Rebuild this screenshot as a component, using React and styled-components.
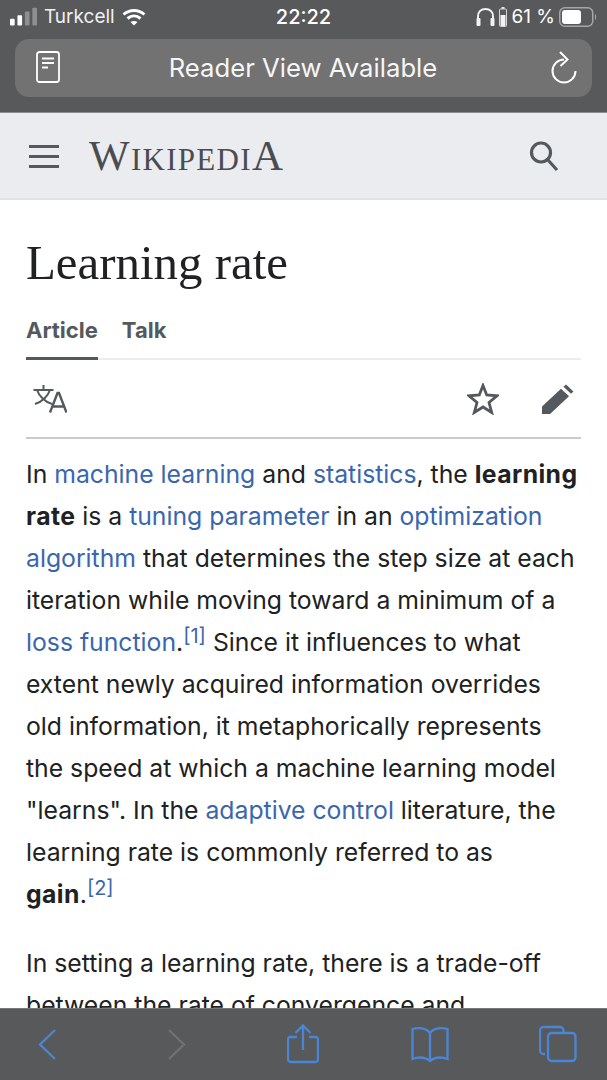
import React from "react";
import styled, { createGlobalStyle } from "styled-components";

const Global = createGlobalStyle`
  html, body { margin: 0; padding: 0; background: #fff; }
  body { font-family: Inter, "Liberation Sans", sans-serif; }
`;

const Page = styled.div`
  width: 607px;
  height: 1080px;
  display: flex;
  flex-direction: column;
  overflow: hidden;
  background: #fff;
`;

const TopChrome = styled.div`
  flex: none;
  height: 113px;
  box-sizing: border-box;
  background: #58595b;
  border-bottom: 1px solid #8b8c8e;
  color: #fff;
`;

const StatusBar = styled.div`
  height: 39px;
  box-sizing: border-box;
  padding: 0 10px 6px 10px;
  display: grid;
  grid-template-columns: 1fr auto 1fr;
  align-items: center;
  font-size: 19px;
`;

const StatusSide = styled.div`
  display: flex;
  align-items: center;
  gap: ${(p) => p.$gap || 7}px;
  justify-content: ${(p) => (p.$end ? "flex-end" : "flex-start")};
`;

const Carrier = styled.span`
  color: #f0f0f0;
  font-weight: 400;
`;

const Clock = styled.span`
  font-weight: 500;
  font-size: 20px;
`;

const AddressPill = styled.div`
  margin: 0 15px;
  height: 58px;
  box-sizing: border-box;
  border-radius: 14px;
  background: #727272;
  display: flex;
  align-items: center;
  justify-content: space-between;
  padding: 0 14px 2px 21px;
  font-size: 25.7px;
  color: #f6f6f6;
`;

const WikiHeader = styled.div`
  flex: none;
  height: 87px;
  box-sizing: border-box;
  background: #eaecf0;
  border-bottom: 2px solid #e2e3e6;
  display: flex;
  align-items: center;
  padding: 0 48px 0 29px;
  color: #54595d;
`;

const Logo = styled.div`
  margin-left: 30px;
  flex: 1;
  font-family: "Liberation Serif", serif;
  font-size: 31px;
  letter-spacing: 1.3px;
  color: #4a4d50;
  line-height: 1;
`;

const LogoCap = styled.span`
  font-size: 43px;
`;

const Content = styled.main`
  flex: 1;
  min-height: 0;
  overflow: hidden;
  padding: 0 26px;
`;

const Title = styled.h1`
  margin: 35px 0 0;
  font-family: "Liberation Serif", serif;
  font-weight: 400;
  font-size: 48.9px;
  line-height: 56px;
  color: #202122;
`;

const Tabs = styled.div`
  margin-top: 24px;
  display: flex;
  gap: 24px;
  border-bottom: 2px solid #eaecf0;
`;

const Tab = styled.div`
  font-size: 22px;
  font-weight: 700;
  line-height: 30px;
  padding-bottom: 12px;
  margin-bottom: -2px;
  color: #54595d;
  border-bottom: 3px solid ${(p) => (p.$active ? "#54595d" : "transparent")};
`;

const Actions = styled.div`
  height: 79px;
  box-sizing: border-box;
  display: flex;
  align-items: center;
  justify-content: space-between;
  padding: 0 7px 0 7px;
  border-bottom: 2px solid #c8ccd1;
`;

const ActionGroup = styled.div`
  display: flex;
  align-items: center;
  gap: 43px;
`;

const Para = styled.p`
  margin: 0 0 27px 0;
  font-size: 24.75px;
  line-height: 42px;
  color: #202122;
  &:first-of-type { margin-top: 14px; }
`;

const Strong = styled.b`
  letter-spacing: 0.4px;
`;

const NoWrap = styled.span`
  white-space: nowrap;
`;

const A = styled.a`
  color: #3a66ad;
`;

const Sup = styled.sup`
  font-size: 20px;
  line-height: 0;
  color: #3a66ad;
  vertical-align: 8px;
`;

const BottomBar = styled.nav`
  flex: none;
  height: 72px;
  box-sizing: border-box;
  background: #58595b;
  border-top: 1px solid #77787a;
  display: grid;
  grid-template-columns: 130px 120px 123px 129px auto;
  align-items: start;
  padding: 15px 0 0 37px;
`;

const BarItem = styled.div`
  color: ${(p) => (p.$dim ? "#707173" : "#4a86d8")};
  line-height: 0;
`;

const Signal = () => (
  <svg width="27" height="20" viewBox="0 0 29 20">
    <rect x="0" y="12" width="5" height="7" rx="1" fill="#fff" />
    <rect x="8" y="8" width="5" height="11" rx="1" fill="#fff" />
    <rect x="16" y="4" width="5" height="15" rx="1" fill="#8e8f91" />
    <rect x="24" y="0" width="5" height="19" rx="1" fill="#8e8f91" />
  </svg>
);

const Wifi = () => (
  <svg width="24" height="18" viewBox="0 0 24 18" fill="none" stroke="#fff" strokeWidth="3">
    <path d="M1.500 6.500C7.500 1 16.500 1 22.500 6.500" />
    <path d="M5.500 10.500C9.500 7 14.500 7 18.500 10.500" />
    <path d="M12 17.500 8.500 14C10.500 12.500 13.500 12.500 15.500 14Z" fill="#fff" stroke="none" />
  </svg>
);

const Headphones = () => (
  <svg width="19" height="20" viewBox="0 0 19 20" fill="none">
    <path d="M2 14V9.500C2 5 5 2 9.500 2S17 5 17 9.500V14" stroke="#f2f2f2" strokeWidth="2" />
    <rect x="0.500" y="11" width="4" height="8" rx="1" fill="#f2f2f2" />
    <rect x="14.500" y="11" width="4" height="8" rx="1" fill="#f2f2f2" />
  </svg>
);

const SmallCell = () => (
  <svg width="8" height="20" viewBox="0 0 8 20">
    <rect x="2.500" y="0" width="3" height="2" fill="#e5e5e5" />
    <rect x="0.500" y="2" width="7" height="17.500" rx="1" fill="none" stroke="#d5d5d5" />
    <rect x="1.500" y="8" width="5" height="11" fill="#f2f2f2" />
  </svg>
);

const Battery = () => (
  <svg width="38" height="20" viewBox="0 0 38 20">
    <rect x="0.750" y="0.750" width="33" height="18.500" rx="5" fill="none" stroke="#a5a6a7" strokeWidth="1.500" />
    <rect x="3" y="3" width="19" height="14" rx="3" fill="#fff" />
    <path d="M36 7c1.500.5 1.500 5.500 0 6z" fill="#a5a6a7" />
  </svg>
);

const ReaderIcon = () => (
  <svg width="24" height="32" viewBox="0 0 24 32" fill="none" stroke="#fff">
    <rect x="1" y="1" width="22" height="30" rx="2.500" strokeWidth="1.800" />
    <path d="M6 7.500h12M6 12h12M6 16.500h6" strokeWidth="1.800" />
  </svg>
);

const ReloadIcon = () => (
  <svg width="32" height="34" viewBox="-4 0 32 34" fill="none" stroke="#fff" strokeWidth="2">
    <path d="M14 9.500A11.500 11.500 0 1 0 25.500 21" />
    <path d="M10 2l7.500 7.500L10.500 16" />
  </svg>
);

const MenuIcon = () => (
  <svg width="30" height="26" viewBox="0 0 30 26" fill="#54595d">
    <rect x="0" y="2" width="30" height="3" />
    <rect x="0" y="12" width="30" height="3" />
    <rect x="0" y="22" width="30" height="3" />
  </svg>
);

const SearchIcon = () => (
  <svg width="30" height="32" viewBox="0 0 30 32" fill="none" stroke="#54595d" strokeWidth="3.200">
    <circle cx="12" cy="12.500" r="9.500" />
    <path d="M18.500 19.500 28 30" />
  </svg>
);

const TranslateIcon = () => (
  <svg width="34" height="32" viewBox="0 0 34 32" fill="none" stroke="#54595d" strokeWidth="2">
    <path d="M0.500 7h20M10.500 2v5M4 7c2 6 8 12 15 14M17 7c-2 6-8 12-15 14" />
    <path d="M17 29.500 24.500 10h1.500l7.500 19.500M20 23.500h11" strokeWidth="2.400" />
  </svg>
);

const StarIcon = () => (
  <svg width="32" height="32" viewBox="0 0 32 32" fill="none" stroke="#54595d" strokeWidth="2.800" strokeLinejoin="miter">
    <path d="M16 2.500 19.700 12 30 12.800 22 19.500 24.700 29.500 16 24 7.300 29.500 10 19.500 2 12.800 12.300 12Z" />
  </svg>
);

const PencilIcon = () => (
  <svg width="32" height="30" viewBox="0 0 32 32" preserveAspectRatio="none" fill="#54595d">
    <path d="M0 24 19 5l8 8L8 32H0Z" />
    <path d="M21.500 3 24 .5 31.500 8 29 10.500Z" />
  </svg>
);

const BarIcon = ({ children, w = 36, h = 44 }) => (
  <svg width={w} height={h} viewBox={`0 0 ${w} ${h}`} fill="none" stroke="currentColor" strokeWidth="2.300">
    {children}
  </svg>
);

export default function App() {
  return (
    <Page>
      <Global />
      <TopChrome>
        <StatusBar>
          <StatusSide>
            <Signal />
            <Carrier>Turkcell</Carrier>
            <Wifi />
          </StatusSide>
          <Clock>22:22</Clock>
          <StatusSide $end $gap={4}>
            <Headphones />
            <SmallCell />
            <span>61 %</span>
            <Battery />
          </StatusSide>
        </StatusBar>
        <AddressPill>
          <ReaderIcon />
          <span>Reader View Available</span>
          <ReloadIcon />
        </AddressPill>
      </TopChrome>
      <WikiHeader>
        <MenuIcon />
        <Logo>
          <LogoCap>W</LogoCap>IKIPEDI<LogoCap>A</LogoCap>
        </Logo>
        <SearchIcon />
      </WikiHeader>
      <Content>
        <Title>Learning rate</Title>
        <Tabs>
          <Tab $active>Article</Tab>
          <Tab>Talk</Tab>
        </Tabs>
        <Actions>
          <TranslateIcon />
          <ActionGroup>
            <StarIcon />
            <PencilIcon />
          </ActionGroup>
        </Actions>
        <Para>
          In <A>machine learning</A> and <A>statistics</A>, the <Strong>learning rate</Strong> is a{" "}
          <A>tuning parameter</A> in an <A>optimization algorithm</A> that determines the step size
          at each iteration while moving toward a minimum of a <NoWrap><A>loss function</A>.<Sup>[1]</Sup></NoWrap>{" "}
          Since it influences to what extent newly acquired information overrides old
          information, it metaphorically represents the speed at which a machine learning model
          "learns". In the <A>adaptive control</A> literature, the learning rate is commonly
          referred to as <NoWrap><Strong>gain</Strong>.<Sup>[2]</Sup></NoWrap>
        </Para>
        <Para>In setting a learning rate, there is a trade-off between the rate of convergence and</Para>
      </Content>
      <BottomBar>
        <BarItem>
          <BarIcon w={20}>
            <path d="M18 6 3 20.500 18 35" />
          </BarIcon>
        </BarItem>
        <BarItem $dim>
          <BarIcon w={20}>
            <path d="M2 6 17 20.500 2 35" />
          </BarIcon>
        </BarItem>
        <BarItem>
          <BarIcon w={32}>
            <path d="M10 13H3.500A2.500 2.500 0 0 0 1 15.500V35.500a2.500 2.500 0 0 0 2.500 2.500h25a2.500 2.500 0 0 0 2.500-2.500V15.500A2.500 2.500 0 0 0 28.500 13H22" />
            <path d="M16 26V1.500M8.500 9 16 1.500 23.500 9" />
          </BarIcon>
        </BarItem>
        <BarItem>
          <BarIcon w={40}>
            <path d="M20 9C16 3.500 8 3.500 2.500 5V35C8 33 15 33 20 37 25 33 32 33 37.500 35V5C32 3.500 24 3.500 20 9ZM20 9V36" />
          </BarIcon>
        </BarItem>
        <BarItem>
          <BarIcon w={38}>
            <path d="M6 30H4.500A3.500 3.500 0 0 1 1 26.500V6.500A3.500 3.500 0 0 1 4.500 3H21a3.500 3.500 0 0 1 3.500 3.500V9" />
            <rect x="9" y="9" width="27.500" height="28" rx="3.500" />
          </BarIcon>
        </BarItem>
      </BottomBar>
    </Page>
  );
}
